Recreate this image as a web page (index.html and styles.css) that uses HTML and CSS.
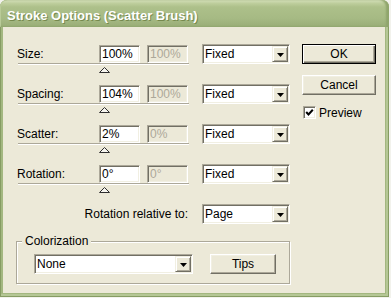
FILE: index.html
```html
<!DOCTYPE html>
<html>
<head>
<meta charset="utf-8">
<title>Stroke Options (Scatter Brush)</title>
<link rel="stylesheet" href="styles.css">
</head>
<body>
<div class="window">
  <div class="titlebar">Stroke Options (Scatter Brush)</div>
  <div class="client">
    <div class="left">
      <div class="row">
        <div class="row-top">
          <span class="label">Size:</span>
          <span class="edit">100%</span>
          <span class="edit disabled">100%</span>
          <span class="combo"><span class="combo-text">Fixed</span><span class="combo-btn"><svg width="7" height="4" viewBox="0 0 7 4"><polygon points="0,0 7,0 3.5,4" fill="#000"/></svg></span></span>
        </div>
        <div class="slider"></div>
        <svg class="thumb" width="11" height="6" viewBox="0 0 11 6"><polygon points="0.5,5.5 5.5,0.5 10.5,5.5" fill="#F7F6F0" stroke="#2E2E2E" stroke-width="1"/></svg>
      </div>
      <div class="row">
        <div class="row-top">
          <span class="label">Spacing:</span>
          <span class="edit">104%</span>
          <span class="edit disabled">100%</span>
          <span class="combo"><span class="combo-text">Fixed</span><span class="combo-btn"><svg width="7" height="4" viewBox="0 0 7 4"><polygon points="0,0 7,0 3.5,4" fill="#000"/></svg></span></span>
        </div>
        <div class="slider"></div>
        <svg class="thumb" width="11" height="6" viewBox="0 0 11 6"><polygon points="0.5,5.5 5.5,0.5 10.5,5.5" fill="#F7F6F0" stroke="#2E2E2E" stroke-width="1"/></svg>
      </div>
      <div class="row">
        <div class="row-top">
          <span class="label">Scatter:</span>
          <span class="edit">2%</span>
          <span class="edit disabled">0%</span>
          <span class="combo"><span class="combo-text">Fixed</span><span class="combo-btn"><svg width="7" height="4" viewBox="0 0 7 4"><polygon points="0,0 7,0 3.5,4" fill="#000"/></svg></span></span>
        </div>
        <div class="slider"></div>
        <svg class="thumb" width="11" height="6" viewBox="0 0 11 6"><polygon points="0.5,5.5 5.5,0.5 10.5,5.5" fill="#F7F6F0" stroke="#2E2E2E" stroke-width="1"/></svg>
      </div>
      <div class="row">
        <div class="row-top">
          <span class="label">Rotation:</span>
          <span class="edit">0°</span>
          <span class="edit disabled">0°</span>
          <span class="combo"><span class="combo-text">Fixed</span><span class="combo-btn"><svg width="7" height="4" viewBox="0 0 7 4"><polygon points="0,0 7,0 3.5,4" fill="#000"/></svg></span></span>
        </div>
        <div class="slider"></div>
        <svg class="thumb" width="11" height="6" viewBox="0 0 11 6"><polygon points="0.5,5.5 5.5,0.5 10.5,5.5" fill="#F7F6F0" stroke="#2E2E2E" stroke-width="1"/></svg>
      </div>
      <div class="relrow">
        <span class="label-right">Rotation relative to:</span>
        <span class="combo"><span class="combo-text">Page</span><span class="combo-btn"><svg width="7" height="4" viewBox="0 0 7 4"><polygon points="0,0 7,0 3.5,4" fill="#000"/></svg></span></span>
      </div>
      <div class="group">
        <span class="legend">Colorization</span>
        <div class="group-row">
          <span class="combo combo-wide"><span class="combo-text">None</span><span class="combo-btn"><svg width="7" height="4" viewBox="0 0 7 4"><polygon points="0,0 7,0 3.5,4" fill="#000"/></svg></span></span>
          <span class="button tips">Tips</span>
        </div>
      </div>
    </div>
    <div class="right">
      <span class="button default">OK</span>
      <span class="button cancel">Cancel</span>
      <span class="check"><span class="box"><svg width="9" height="9" viewBox="0 0 9 9"><polyline points="1.2,4 3.5,6.5 7.8,1.8" fill="none" stroke="#000" stroke-width="2"/></svg></span>Preview</span>
    </div>
  </div>
</div>
</body>
</html>
```
FILE: styles.css
```css
* { box-sizing: border-box; }
html, body { margin: 0; padding: 0; }
body {
  width: 391px;
  height: 298px;
  overflow: hidden;
  background: #F2F2EC;
  font-family: "Liberation Sans", Arial, sans-serif;
  font-size: 12px;
  color: #000;
}
.window {
  width: 389px;
  height: 297px;
  background: #A3B780;
  border-radius: 7px 7px 0 0;
  padding: 0 4px 4px 3px;
  display: flex;
  flex-direction: column;
  box-shadow: inset 0 0 0 1px #869C63, inset -2px -2px 0 1px #B5C795;
}
.titlebar {
  height: 27px;
  margin: 0 -4px 0 -3px;
  border-radius: 7px 7px 0 0;
  background: linear-gradient(to bottom, #DCE5C2 0, #BFCF9E 3px, #ADC08A 7px, #A6BA84 18px, #9CB07A 25px, #93A872 27px);
  box-shadow: inset -3px 0 2px #8FA56C, inset 1px 0 0 #B9CB98;
  color: #FFFFFF;
  font-weight: bold;
  font-size: 13px;
  line-height: 25px;
  padding: 3px 0 0 7px;
  text-shadow: 1px 1px 0 #75894E;
  white-space: nowrap;
}
.client {
  flex: 1;
  background: #ECE9D8;
  display: flex;
  padding: 17px 0 0 13px;
}
.left {
  width: 274px;
  display: flex;
  flex-direction: column;
}
.right {
  margin-left: 12px;
  width: 74px;
  display: flex;
  flex-direction: column;
}
.row {
  height: 40px;
  display: flex;
  flex-direction: column;
}
.row-top {
  height: 20px;
  display: flex;
  align-items: center;
}
.label {
  width: 83px;
  padding-left: 1px;
  line-height: 20px;
}
.edit {
  width: 41px;
  height: 18px;
  background: #FFFFFF;
  border: 1px solid;
  border-color: #ACA899 #FFFFFF #FFFFFF #ACA899;
  box-shadow: inset 1px 1px 0 #716F64, inset -1px -1px 0 #F1EFE2;
  padding-left: 2px;
  line-height: 16px;
  white-space: nowrap;
}
.edit.disabled {
  margin-left: 7px;
  background: #ECE9D8;
  color: #ACA899;
}
.combo {
  margin-left: 14px;
  width: 88px;
  height: 20px;
  display: flex;
  background: #FFFFFF;
  border: 1px solid;
  border-color: #ACA899 #FFFFFF #FFFFFF #ACA899;
  box-shadow: inset 1px 1px 0 #716F64, inset -1px -1px 0 #F1EFE2;
  padding: 1px;
}
.combo-text {
  flex: 1;
  padding-left: 1px;
  line-height: 16px;
  white-space: nowrap;
}
.combo-btn {
  width: 16px;
  height: 16px;
  background: #ECE9D8;
  border: 1px solid;
  border-color: #F1EFE2 #716F64 #716F64 #F1EFE2;
  box-shadow: inset 1px 1px 0 #FFFFFF, inset -1px -1px 0 #ACA899;
  display: flex;
  align-items: center;
  justify-content: center;
}
.combo-btn svg { display: block; margin-top: 1px; }
.slider {
  margin: -1px 0 0 2px;
  width: 171px;
  height: 2px;
  border-top: 1px solid #ACA899;
  border-bottom: 1px solid #FFFFFF;
}
.thumb {
  display: block;
  margin: 2px 0 0 83px;
}
.relrow {
  height: 20px;
  display: flex;
  align-items: center;
  justify-content: flex-end;
}
.label-right {
  line-height: 20px;
  white-space: nowrap;
}
.group {
  margin-top: 17px;
  width: 274px;
  border: 1px solid #ACA899;
  box-shadow: 1px 1px 0 #FFFFFF, inset 1px 1px 0 #FFFFFF;
  display: flex;
  flex-direction: column;
  padding: 0 0 9px 17px;
}
.legend {
  align-self: flex-start;
  margin: -8px 0 0 -12px;
  padding: 0 3px;
  background: #ECE9D8;
  line-height: 14px;
}
.group-row {
  margin-top: 6px;
  display: flex;
}
.combo-wide {
  margin-left: 0;
  width: 159px;
}
.button {
  display: flex;
  align-items: center;
  justify-content: center;
  height: 20px;
  background: #ECE9D8;
  border: 1px solid;
  border-color: #FFFFFF #716F64 #716F64 #FFFFFF;
  box-shadow: inset -1px -1px 0 #ACA899, inset 1px 1px 0 #F1EFE2;
  line-height: 16px;
}
.button.default {
  border: 1px solid #000000;
  box-shadow: inset 1px 1px 0 #FFFFFF, inset -1px -1px 0 #716F64, inset -2px -2px 0 #ACA899;
}
.button.cancel {
  margin-top: 11px;
}
.tips {
  margin-left: 17px;
  width: 66px;
}
.check {
  margin-top: 11px;
  display: flex;
  align-items: center;
  height: 13px;
  white-space: nowrap;
}
.box {
  margin: 0 3px 0 1px;
  width: 13px;
  height: 13px;
  background: #FFFFFF;
  border: 1px solid;
  border-color: #ACA899 #FFFFFF #FFFFFF #ACA899;
  box-shadow: inset 1px 1px 0 #716F64, inset -1px -1px 0 #F1EFE2;
  display: flex;
  align-items: center;
  justify-content: center;
}
.box svg { display: block; }
```
